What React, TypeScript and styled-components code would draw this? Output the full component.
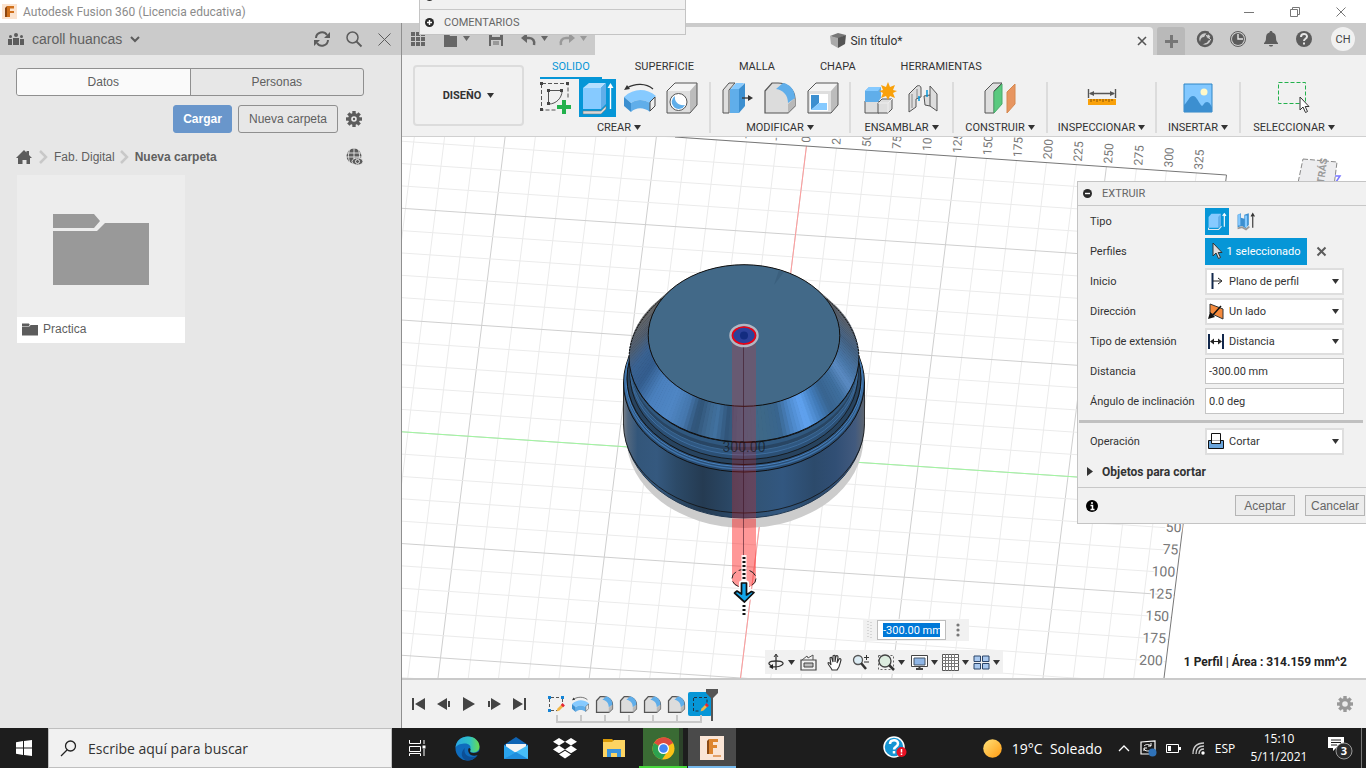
import React from "react";
import styled, { createGlobalStyle, css } from "styled-components";

const UI = `Roboto, "Liberation Sans", sans-serif`;
const PANEL = `"Liberation Sans", Arial, sans-serif`;
const SYSTEM = `"Open Sans", "Noto Sans", sans-serif`;

const Global = createGlobalStyle`
  * { box-sizing: border-box; }
  body { margin: 0; background: #fff; font-family: ${UI}; font-size: 11px; color: #333; overflow: hidden; }
  button, input, select { font: inherit; color: inherit; margin: 0; }
  button { padding: 0; border: 0; background: none; display: inline-flex; align-items: center; justify-content: center; }
  svg { display: block; flex: none; overflow: visible; }
`;

const Screen = styled.div`
  display: flex;
  flex-direction: column;
  height: 100vh;
  position: relative;
`;

/* ---------- window title bar ---------- */
const TitleBar = styled.header`
  display: flex;
  align-items: center;
  height: 23px;
  padding-left: 2px;
  background: #fff;
  font-size: 12px;
  color: #8b8b8b;
`;
const TitleText = styled.span`
  flex: 1;
  margin-left: 6px;
`;
const WindowButton = styled.button`
  width: 46px;
  height: 22px;
`;
const WindowButtons = styled.div`
  display: flex;
  margin-right: 2px;
`;

const Main = styled.main`
  flex: 1;
  display: flex;
  min-height: 0;
`;

/* ---------- data panel ---------- */
const DataPanel = styled.aside`
  flex: none;
  width: 402px;
  background: #e7e7e7;
  border-right: 1px solid #8f8f8f;
  font: 12px ${PANEL};
  color: #5f5f5f;
`;
const PanelHeader = styled.div`
  display: flex;
  align-items: center;
  height: 32px;
  padding: 0 10px 0 8px;
  background: #cbcbcb;
  font-size: 14px;
`;
const TeamButton = styled.button`
  gap: 8px;
  margin-right: auto;
`;
const PanelTools = styled.div`
  display: flex;
  gap: 16px;
`;
const PanelBody = styled.div`
  padding: 13px 37px 0 16px;
`;
const Toggle = styled.div`
  display: flex;
  height: 28px;
  border: 1px solid #8f8f8f;
  border-radius: 3px;
  overflow: hidden;
`;
const ToggleButton = styled.button<{ $on?: boolean }>`
  flex: 1;
  background: ${(p) => (p.$on ? "#fafafa" : "transparent")};
  & + & { border-left: 1px solid #8f8f8f; }
`;
const Actions = styled.div`
  display: flex;
  justify-content: flex-end;
  align-items: center;
  gap: 6px;
  margin-top: 9px;
`;
const ActionButton = styled.button<{ $primary?: boolean }>`
  height: 28px;
  width: 100px;
  border: 1px solid #8f8f8f;
  border-radius: 3px;
  ${(p) => p.$primary && css`
    width: 59px;
    border-color: #6996cb;
    background: #6996cb;
    color: #fff;
    font-weight: bold;
  `}
`;
const GearButton = styled.button`
  width: 20px;
`;
const Breadcrumb = styled.nav`
  display: flex;
  align-items: center;
  gap: 6px;
  height: 18px;
  margin-top: 15px;
  a { color: inherit; text-decoration: none; }
  button { margin-left: auto; }
`;
const FolderCard = styled.article`
  width: 168px;
  margin: 9px 0 0 1px;
  background: #fff;
`;
const FolderArt = styled.div`
  display: grid;
  place-items: center;
  height: 142px;
  padding-top: 6px;
  background: #ededed;
`;
const FolderName = styled.div`
  display: flex;
  align-items: center;
  gap: 5px;
  height: 26px;
  padding: 0 5px 2px;
`;

/* ---------- workspace ---------- */
const Workspace = styled.section`
  flex: 1;
  min-width: 0;
  display: flex;
  flex-direction: column;
`;
const DocumentBar = styled.div`
  display: flex;
  height: 32px;
  background: #cbcbcb;
  color: #555;
`;
const QuickAccess = styled.div`
  display: flex;
  align-items: center;
  width: 193px;
  padding-left: 9px;
`;
const DocumentTab = styled.div`
  flex: 1;
  display: flex;
  align-items: center;
  margin-top: 4px;
  padding-right: 4px;
  border-radius: 0 4px 0 0;
  background: #f1f1f1;
`;
const DocumentTitle = styled.div`
  flex: 1;
  display: flex;
  align-items: center;
  justify-content: center;
  gap: 4px;
  padding-left: 3px;
  font-size: 12px;
  color: #333;
`;
const NewTab = styled.button`
  width: 28px;
  margin: 4px 0 0 4px;
  border-radius: 3px 3px 0 0;
  background: #b9b9b9;
`;
const AccountTools = styled.div`
  display: flex;
  align-items: center;
  gap: 15px;
  padding: 0 11px;
`;
const Avatar = styled.button`
  width: 24px;
  height: 24px;
  margin-left: 3px;
  border-radius: 50%;
  background: #f1f1f1;
  color: #444;
`;

const Ribbon = styled.div`
  display: flex;
  height: 82px;
  padding-left: 11px;
  background: #f1f1f1;
  border-bottom: 1px solid #d0d0d0;
`;
const WorkspaceButton = styled.button`
  gap: 6px;
  width: 111px;
  height: 61px;
  margin: 10px 16px 0 0;
  border: 2px solid #dcdcdc;
  border-radius: 4px;
  font-weight: bold;
`;
const RibbonBody = styled.div`
  flex: 1;
`;
const RibbonTabs = styled.div`
  display: flex;
  gap: 21px;
  height: 24px;
`;
const RibbonTab = styled.button<{ $on?: boolean }>`
  padding: 0 12px;
  border-bottom: 2px solid ${(p) => (p.$on ? "#0696d7" : "transparent")};
  color: ${(p) => (p.$on ? "#0696d7" : "#333")};
`;
const Groups = styled.div`
  display: flex;
`;
const Group = styled.div<{ $w: number }>`
  display: flex;
  flex-direction: column;
  width: ${(p) => p.$w}px;
`;
const GroupIcons = styled.div`
  display: flex;
  justify-content: center;
  gap: 10px;
  height: 38px;
`;
const ToolButton = styled.button<{ $on?: boolean }>`
  width: ${(p) => (p.$on ? 38 : 33)}px;
  height: 38px;
  margin: ${(p) => (p.$on ? "0 -3px" : "0")};
  background: ${(p) => (p.$on ? "#0696d7" : "none")};
`;
const GroupLabel = styled.button`
  gap: 3px;
  height: 20px;
  white-space: nowrap;
`;
const Separator = styled.span`
  width: 2px;
  height: 51px;
  margin: 3px 0;
  background: #dcdcdc;
  &:first-of-type { margin-left: 11px; }
`;

/* ---------- 3D canvas ---------- */
const Canvas = styled.div`
  position: relative;
  flex: 1;
  min-height: 0;
  overflow: hidden;
  background: #fff;
  border-bottom: 2px solid #cacaca;
`;
const Scene = styled.svg`
  position: absolute;
  inset: 0;
  width: 100%;
  height: 100%;
`;
const ValueBox = styled.div`
  position: absolute;
  left: 461px;
  top: 482px;
  display: flex;
  align-items: center;
  gap: 5px;
  height: 22px;
  padding: 0 4px;
  background: #f1f1f1;
  input {
    width: 69px;
    height: 20px;
    padding: 2px 5px;
    border: 1px solid #bdbdbd;
    background: linear-gradient(#0078d7, #0078d7) content-box, #fff;
    color: #fff;
  }
  button { width: 14px; }
`;
const ViewBar = styled.div`
  position: absolute;
  bottom: 4px;
  left: 50%;
  transform: translateX(-50%);
  display: flex;
  align-items: center;
  height: 24px;
  padding: 0 3px;
  background: #f1f1f1;
`;
const ViewButton = styled.button<{ $w: number }>`
  width: ${(p) => p.$w}px;
  justify-content: flex-start;
  gap: 3px;
`;
const Status = styled.div`
  position: absolute;
  right: 19px;
  bottom: 9px;
  font-weight: bold;
  font-size: 12px;
  color: #222;
`;

/* ---------- extrude dialog ---------- */
const Dialog = styled.form`
  position: absolute;
  top: 44px;
  right: 0;
  width: 289px;
  background: #f1f1f1;
  border: 1px solid #c4c4c4;
  border-right: 0;
`;
const DialogHeader = styled.div`
  display: flex;
  align-items: center;
  gap: 10px;
  height: 24px;
  padding-left: 5px;
  border-bottom: 1px solid #c8c8c8;
  color: #666;
`;
const Row = styled.div`
  display: flex;
  align-items: center;
  height: 30px;
  padding-left: 12px;
  label, > span { width: 115px; }
`;
const TypeButton = styled.button<{ $on?: boolean }>`
  width: 24px;
  height: 27px;
  margin-right: 5px;
  background: ${(p) => (p.$on ? "#0696d7" : "none")};
`;
const Selection = styled.button`
  gap: 4px;
  width: 102px;
  height: 27px;
  margin-right: 10px;
  background: #0696d7;
  color: #fff;
`;
const SelectBox = styled.div`
  position: relative;
  width: 139px;
  select {
    appearance: none;
    width: 100%;
    height: 27px;
    padding: 0 20px 0 22px;
    border: 2px solid #dedede;
    border-radius: 0;
    background: #fff;
  }
  svg { position: absolute; left: 3px; top: 5px; pointer-events: none; }
  svg:last-child { left: auto; right: 5px; top: 11px; }
`;
const TextBox = styled.input`
  width: 139px;
  height: 26px;
  padding: 0 3px;
  border: 1px solid #c4c4c4;
  background: #fff;
`;
const Divider = styled.hr`
  height: 3px;
  margin: 4px 3px 3px 1px;
  border: 0;
  background: #c0c0c0;
`;
const Expander = styled.button`
  gap: 9px;
  height: 31px;
  padding-left: 9px;
  font-weight: bold;
  font-size: 12px;
`;
const DialogFooter = styled.div`
  display: flex;
  align-items: center;
  gap: 10px;
  height: 36px;
  padding: 0 1px 0 8px;
  border-top: 1px solid #c8c8c8;
  svg { margin-right: auto; }
`;
const DialogButton = styled.button`
  height: 21px;
  width: 60px;
  border: 1px solid #b5b5b5;
  background: #ececec;
  font: 12px ${PANEL};
  color: #666;
`;

/* ---------- timeline ---------- */
const Timeline = styled.div`
  display: flex;
  align-items: flex-start;
  height: 48px;
  padding: 12px 13px 0 9px;
  background: #f1f1f1;
`;
const Playback = styled.div`
  display: flex;
  gap: 9px;
  button { width: 16px; height: 24px; }
`;
const Track = styled.div`
  display: flex;
  position: relative;
  margin-left: 17px;
`;
const Feature = styled.button<{ $on?: boolean }>`
  position: relative;
  width: 24px;
  height: 24px;
  background: ${(p) => (p.$on ? "#0696d7" : "none")};
  border-radius: 2px;
  &::after {
    content: "";
    position: absolute;
    left: 12px;
    top: 23px;
    width: 24px;
    height: 6px;
    border: solid #c8c8c8;
    border-width: 0 0 2px 2px;
  }
  &:nth-last-of-type(1)::after { width: 2px; border-bottom: 0; height: 6px; }
`;
const Marker = styled.svg`
  position: absolute;
  right: -6px;
  top: -3px;
`;
const TimelineGear = styled.button`
  margin-left: auto;
  height: 24px;
`;

/* ---------- floating browser / comments ---------- */
const Floating = styled.div`
  position: absolute;
  top: 0;
  left: 419px;
  width: 267px;
  height: 35px;
  overflow: hidden;
  display: flex;
  flex-direction: column;
  justify-content: flex-end;
  background: #f1f1f1;
  border: 1px solid #c4c4c4;
  border-top: 0;
  color: #666;
`;
const FloatingRow = styled.div`
  flex: none;
  display: flex;
  align-items: center;
  gap: 10px;
  height: 25px;
  padding-left: 5px;
  & + & { border-top: 1px solid #c8c8c8; }
`;

/* ---------- taskbar ---------- */
const Taskbar = styled.footer`
  display: flex;
  align-items: stretch;
  height: 40px;
  background: #1d1d1d;
  color: #fff;
  font: 12px ${SYSTEM};
`;
const StartButton = styled.button`
  width: 48px;
`;
const SearchBox = styled.label`
  display: flex;
  align-items: center;
  gap: 11px;
  width: 344px;
  padding-left: 11px;
  border: 1px solid #bfbfbf;
  background: #f1f1f1;
  input {
    flex: 1;
    border: 0;
    background: none;
    padding: 0;
    font: 14px ${SYSTEM};
    outline: 0;
    &::placeholder { color: #333; opacity: 1; }
  }
`;
const Apps = styled.div`
  display: flex;
  gap: 1px;
  button { width: 48px; }
  button:first-child { width: 50px; }
`;
const AppButton = styled.button<{ $bg?: string; $line?: string }>`
  background: ${(p) => p.$bg || "none"};
  border-bottom: 2px solid ${(p) => p.$line || "transparent"};
  padding-top: 2px;
`;
const Tray = styled.div`
  display: flex;
  align-items: center;
  margin-left: auto;
  padding-right: 4px;
`;
const TrayButton = styled.button<{ $w: number; $large?: boolean }>`
  width: ${(p) => p.$w}px;
  height: 40px;
  gap: 10px;
  white-space: pre;
  font-size: ${(p) => (p.$large ? 14 : 12)}px;
`;
const Clock = styled.time`
  width: 80px;
  text-align: center;
  line-height: 18px;
`;
const ShowDesktop = styled.span`
  width: 1px;
  height: 40px;
  background: #777;
`;

/* ---------- small glyphs ---------- */
type IconProps = { w?: number; h?: number; box?: string; children: React.ReactNode };
const Icon = ({ w = 16, h, box, children }: IconProps) => (
  <svg width={w} height={h ?? w} viewBox={box ?? `0 0 ${w} ${h ?? w}`} fill="none" aria-hidden="true">{children}</svg>
);
const Caret = ({ c = "#333" }: { c?: string }) => (
  <Icon w={7} h={5}><path d="M0 0h7L3.500 5z" fill={c} /></Icon>
);
const Gear = ({ c = "#5c5c5c" }: { c?: string }) => (
  <Icon>
    {[0, 45, 90, 135].map((a) => <path key={a} d="M8 0v16" stroke={c} strokeWidth="3.400" transform={`rotate(${a} 8 8)`} />)}
    <circle cx="8" cy="8" r="4.300" stroke={c} strokeWidth="3.200" />
    <circle cx="8" cy="8" r="2.800" fill="#ececec" />
    {c === "#5c5c5c" && <circle cx="8" cy="8" r="1.200" fill={c} />}
  </Icon>
);
const Cross = ({ s = 9, w = 2, c = "#5c5c5c" }) => (
  <Icon w={s}><path d={`M0.500 0.500L${s - 0.5} ${s - 0.5}M${s - 0.5} 0.500L0.500 ${s - 0.5}`} stroke={c} strokeWidth={w} /></Icon>
);
const Bullet = ({ plus }: { plus?: boolean }) => (
  <Icon w={9}><circle cx="4.500" cy="4.500" r="4.500" fill="#2b2b2b" /><path d={plus ? "M2 4.500h5M4.500 2v5" : "M2 4.500h5"} stroke="#fff" strokeWidth="1.400" /></Icon>
);
const Cursor = ({ fill = "#ddd" }) => (
  <path d="M1 0v13l3-3 2.500 5.500 2-1L6.200 9.500H10z" fill={fill} stroke="#333" />
);
const FolderGlyph = ({ w, h, c }: { w: number; h: number; c: string }) => (
  <Icon w={w} h={h} box="0 0 96 71"><path d="M0 0h41l6 7-6 7H0zM0 17h44l8-8h44v62H0z" fill={c} /></Icon>
);

/* ---------- ribbon icons ---------- */
const SketchIcon = () => (
  <Icon w={32}>
    <path d="M2 1.500h26v16M1.500 2v26h15" stroke="#555" strokeDasharray="4 2" />
    <path d="M9 8.500h13M8.500 9v13M9 22c7 0 13-6 13-13" stroke="#555" />
    {[[0, 0], [26, 0], [0, 26], [7, 7], [20, 7], [7, 20]].map(([x, y]) => <path key={`${x}-${y}`} d={`M${x} ${y}h3v3h-3z`} fill="#444" />)}
    <path d="M24 18v14M17 25h14" stroke="#22b14c" strokeWidth="4" />
  </Icon>
);
const ExtrudeIcon = () => (
  <Icon w={32}>
    <path d="M1 29h18l5-5v3l-5 5H1z" fill="#d8d8d8" stroke="#777" strokeWidth=".5" />
    <path d="M1 6l6-5h17l-5 5z" fill="#b5dfff" /><path d="M1 6h18v21H1z" fill="#86caff" /><path d="M19 6l5-5v21l-5 5z" fill="#60aeea" />
    <path d="M28.500 27V4" stroke="#fff" strokeWidth="1.400" /><path d="M25.500 6l3-5 3 5z" fill="#fff" />
  </Icon>
);
const RevolveIcon = ({ w = 32 }: { w?: number }) => (
  <Icon w={w} box="0 0 32 32">
    <path d="M3 6C11 1 22 1 29 7" stroke="#333" strokeWidth="1.200" /><path d="M0 8l3-5 3 4z" fill="#333" />
    <path d="M0 15C10 6 22 6 32 14l-6 7c-6-4-14-4-19 0z" fill="#86caff" />
    <path d="M0 15l7 6v9l-7-6z" fill="#3c8fd0" /><path d="M7 21c5-4 13-4 19 0v9c-6-5-14-5-19 0z" fill="#60aeea" />
    <path d="M26 20l5-5v9l-5 5z" fill="#eee" stroke="#444" />
  </Icon>
);
const BoxShape = () => (
  <>
    <path d="M1 9l8-8h22l-7 8z" fill="#f4f4f4" /><path d="M24 9l7-8v22l-7 8z" fill="#bcbcbc" /><path d="M1 9h23v22H1z" fill="#dedede" />
    <path d="M1 9l8-8h22v22l-7 8H1z" stroke="#555" />
  </>
);
const HoleIcon = () => (
  <Icon w={32}><BoxShape /><circle cx="12.500" cy="20" r="8.500" fill="#fff" stroke="#555" /><path d="M9 14a7 7 0 1 0 10 9C13 24 8 20 9 14z" fill="#60aeea" /></Icon>
);
const PressPullIcon = () => (
  <Icon w={32}>
    <path d="M2 8l6-7h6l-6 7v23H2z" fill="#dedede" stroke="#555" /><path d="M9 8l6-7h8l-5 7z" fill="#86caff" />
    <path d="M9 7h9v24H9z" fill="#60aeea" /><path d="M18 7l6-6v23l-6 7z" fill="#3c8fd0" />
    <path d="M21 16h9" stroke="#333" strokeWidth="1.300" /><path d="M27 13l5 3-5 3z" fill="#333" />
  </Icon>
);
const FilletIcon = ({ w = 32 }: { w?: number }) => (
  <Icon w={w} box="0 0 32 32">
    <path d="M1 9l7-8h6c8 0 17 6 17 16v7l-7 7H1z" fill="#dcdcdc" stroke="#555" strokeWidth={w < 20 ? 2.4 : 1.2} />
    <path d="M24 22l7-6v8l-7 7z" fill="#b8b8b8" />
    <path d="M12 7l7-6c7 1 12 7 12 15l-7 5C24 13 19 8 12 7z" fill="#60aeea" />
  </Icon>
);
const ShellIcon = () => (
  <Icon w={32}><BoxShape /><path d="M3 12h18v17H3z" fill="#fff" /><path d="M4 13h8v8l-8 7z" fill="#3c8fd0" /><path d="M4 28l8-7h8v7z" fill="#86caff" /></Icon>
);
const AssembleIcon = () => (
  <Icon w={32}>
    <path d="M1 19h14v12H1z" fill="#dedede" stroke="#555" /><path d="M14 21l4-4h10v10l-4 4H14z" fill="#dedede" stroke="#555" /><path d="M14 21h10v10M24 21l4-4" stroke="#eee" />
    <path d="M1 9l4-4h12v11l-3 4H1z" fill="#60aeea" /><path d="M1 9l4-4h12l-3 4z" fill="#86caff" />
    <path d="M24 0l2 5 5-2-2 5 4 1-4 2 2 5-5-2-2 4-2-4-5 2 2-5-4-2 4-1-2-5 5 2z" fill="#f9a10a" />
  </Icon>
);
const JointIcon = () => (
  <Icon w={32}>
    <path d="M2 12l8-8c2-1 4 0 4 2v9l-5 2v8l-7 5z" fill="#ddd" stroke="#555" /><path d="M5 12v14M10 7v9" stroke="#888" />
    <path d="M17 14l6-1V4l7 8v17l-7-5-5-1z" fill="#ddd" stroke="#555" /><path d="M23 13v11" stroke="#555" />
    <path d="M12 14v5M20 8v7" stroke="#0696d7" strokeWidth="1.500" />
  </Icon>
);
const PlaneIcon = () => (
  <Icon w={32}>
    <path d="M1 9l8-8h9l-8 8v22H1z" fill="#dedede" stroke="#555" /><path d="M10 10l8-8v20l-8 9z" fill="#5ac97f" stroke="#48ab6a" />
    <path d="M23 10l8-8v20l-8 9z" fill="#e79560" stroke="#d6884f" />
  </Icon>
);
const MeasureIcon = () => (
  <Icon w={30} h={32}>
    <path d="M1.500 7v9M28.500 7v9M3 11.500h24" stroke="#555" strokeWidth="1.400" /><path d="M2 11.500l5-2.500v5zM28 11.500l-5-2.500v5z" fill="#555" />
    <path d="M1 17h28v6H1z" fill="#f9a10a" /><path d="M4 17v3M7 17v2M10 17v3M13 17v2M16 17v3M19 17v2M22 17v3M25 17v2" stroke="#8a5200" />
  </Icon>
);
const ImageIcon = () => (
  <Icon w={30}>
    <path d="M1 1h28v28H1z" fill="#82c8ff" stroke="#2f86c6" /><circle cx="21" cy="9" r="3.500" fill="#fff8c8" />
    <path d="M1 22c4-3 5-9 9-9s6 8 9 10c2-1 2-4 5-4s4 4 5 5v5H1z" fill="#3c8fd0" />
  </Icon>
);
const SelectIcon = () => (
  <Icon w={32}><path d="M.5 .5h27v21h-27z" stroke="#22b14c" strokeDasharray="4 2" /><g transform="translate(21 15)"><Cursor fill="#fff" /></g></Icon>
);

/* ---------- scene geometry ---------- */
const CX = 744;
const colX = (n: number, y: number) => 807.6 + 30.25 * n - 0.124 * (y - 137);
const rowY = (m: number, x: number) => 431.8 + 22.35 * m + 0.067 * (x - 402);

const shades: [number, string][] = [
  [-90, "#7b8288"], [-40, "#6d6f72"], [-18, "#5b6573"], [0, "#456486"], [14, "#4977a8"], [22, "#5b8cc4"], [30, "#3f6f9f"],
  [40, "#38648f"], [47, "#427cba"], [56, "#62a4f2"], [64, "#4c87c8"], [71, "#39658e"], [80, "#3e6887"], [92, "#3d6486"],
  [99, "#31557a"], [105, "#41719f"], [110, "#3d6890"], [116, "#2f5275"], [123, "#4577ad"], [132, "#4f86c4"], [146, "#4a80bd"],
  [158, "#335d8e"], [170, "#3a6292"], [184, "#525f70"], [205, "#6b6c6d"], [270, "#7b8288"],
];
const rgb = (h: string) => [1, 3, 5].map((i) => parseInt(h.slice(i, i + 2), 16));
const shadeAt = (a: number) => {
  const i = Math.max(1, shades.findIndex(([s]) => s >= a));
  const [a0, c0] = shades[i - 1];
  const [a1, c1] = shades[i];
  const t = (a - a0) / (a1 - a0);
  const p = rgb(c0);
  const q = rgb(c1);
  return `rgb(${p.map((v, k) => Math.round(v + (q[k] - v) * t)).join(",")})`;
};
const onEllipse = (a: number, rx: number, ry: number, cy: number) => {
  const r = (a * Math.PI) / 180;
  return `${(CX + rx * Math.cos(r)).toFixed(1)},${(cy + ry * Math.sin(r)).toFixed(1)}`;
};
const facets = Array.from({ length: 180 }, (_, i) => {
  const a = -90 + i * 2;
  return {
    fill: shadeAt(a + 1),
    points: [onEllipse(a, 95.8, 70.8, 335.5), onEllipse(a + 2.4, 95.8, 70.8, 335.5), onEllipse(a + 2.4, 115, 85, 357), onEllipse(a, 115, 85, 357)].join(" "),
  };
});
const bodyStops: [number, string][] = [[0, "#7b828a"], [2, "#51677f"], [6, "#33567a"], [14, "#35597f"], [22, "#2c4a68"], [33, "#253b52"], [43, "#2a4663"], [52, "#315373"], [66, "#325780"], [79, "#2c4a6b"], [88, "#314f75"], [96, "#425a7e"], [100, "#606770"]];

const Model = () => (
  <g>
    <ellipse cx="745" cy="438" rx="118.500" ry="90" fill="#ccc" />
    <path d="M624 424a120 94 0 0 0 240 0z" fill="url(#body)" stroke="#243b54" />
    <path d="M623.500 383V424a120.500 89 0 0 0 241 0V383z" fill="url(#body)" />
    <path d="M623.500 383V424a120.500 89 0 0 0 241 0V383" stroke="#111" strokeWidth=".8" />
    <ellipse cx="744" cy="383" rx="120.500" ry="89" fill="#2a4d73" stroke="#111" />
    <ellipse cx="744" cy="381.500" rx="119" ry="87.500" stroke="#3f74ab" strokeWidth="1.500" />
    <ellipse cx="744" cy="379.500" rx="118" ry="87" stroke="#4a83bf" strokeWidth="1" />
    <ellipse cx="744" cy="378" rx="117" ry="86.500" fill="#27435f" stroke="#111" />
    <ellipse cx="744" cy="375" rx="114" ry="84.500" fill="#2c5075" stroke="#111" strokeWidth=".8" />
    <ellipse cx="744" cy="371" rx="113.500" ry="84" fill="#2f5780" stroke="#3f6e9f" />
    <ellipse cx="744" cy="367" rx="113.500" ry="84" fill="#284563" stroke="#3c6893" />
    <ellipse cx="744" cy="363" rx="114" ry="84" fill="#30587f" />
    <ellipse cx="744" cy="358" rx="115" ry="85" fill="#111" />
    {facets.map((f) => <polygon key={f.points} points={f.points} fill={f.fill} />)}
    <path d="M629 357a115 85 0 0 0 230 0" stroke="#111" />
    <path d="M629 357C630 332 645 313 662 298M859 357C858 332 843 313 826 298" stroke="#111" strokeDasharray="2 1" />
    <ellipse cx="744" cy="335.500" rx="95.800" ry="70.800" fill="#426988" stroke="#111" />
    <path d="M774 285l5-15 5 2z" fill="#3b607e" />
    <path d="M732 337h24v242a12 9 0 0 1-24 0z" fill="#ff2020" fillOpacity=".2" />
    <path d="M732 470h24v48h-24z" fill="#ff2020" fillOpacity=".06" />
    <path d="M732 519h24v60a12 9 0 0 1-24 0z" fill="#ff2020" fillOpacity=".33" />
    <path d="M743.500 337V578" stroke="#3a1020" strokeWidth=".8" strokeOpacity=".7" />
    <ellipse cx="744" cy="335.500" rx="13.500" ry="10.500" stroke="#b3b6c2" strokeWidth="2.500" />
    <ellipse cx="744" cy="335.500" rx="11.500" ry="8.500" fill="#2c419a" stroke="#f00012" strokeWidth="1.600" />
    <circle cx="744" cy="335.500" r="4" fill="#132c80" />
    <text x="744" y="452" textAnchor="middle" fontSize="14" fill="#111" fillOpacity=".6">300.00</text>
    <ellipse cx="744" cy="578.500" rx="12" ry="9" stroke="#222" strokeDasharray="8 3" />
    <path d="M744 555v61" stroke="#fff" strokeWidth="5" strokeOpacity=".9" />
    <path d="M744 557v59" stroke="#111" strokeWidth="3" strokeDasharray="2 2" />
    <path d="M741.500 583h5v12l5-3.500 2.500 1-9.500 9.500-10-9 2.500-2 4.500 3z" fill="#13a5ea" stroke="#fff" strokeWidth="5" strokeLinejoin="round" />
    <path d="M741.500 583h5v12l5-3.500 2.500 1-9.500 9.500-10-9 2.500-2 4.500 3z" fill="#13a5ea" stroke="#111" strokeWidth="1.700" strokeLinejoin="round" />
  </g>
);

const range = (a: number, b: number) => Array.from({ length: b - a + 1 }, (_, i) => a + i);

const Viewport = () => (
  <Scene viewBox="402 137 964 541" preserveAspectRatio="xMinYMin slice" fill="none" fontFamily={UI}>
    <defs>
      <linearGradient id="body" gradientUnits="userSpaceOnUse" x1="623" x2="865" y1="0" y2="0">
        {bodyStops.map(([o, c]) => <stop key={o} offset={`${o}%`} stopColor={c} />)}
      </linearGradient>
      <clipPath id="plane"><path d="M402 118L1227 175 1164 680H402z" /></clipPath>
    </defs>
    <g clipPath="url(#plane)">
      {range(-14, 13).map((n) => <path key={n} d={`M${colX(n, 110)} 110L${colX(n, 680)} 680`} stroke={n % 5 ? "#ebebeb" : "#cfcfcf"} />)}
      {range(-14, 13).map((m) => <path key={m} d={`M402 ${rowY(m, 402)}L1230 ${rowY(m, 1230)}`} stroke={m % 5 ? "#ebebeb" : "#cfcfcf"} />)}
      <path d={`M${colX(0, 146)} 146L${colX(0, 680)} 680`} stroke="#ff9c9c" />
      <path d={`M402 ${rowY(0, 402)}L1230 ${rowY(0, 1230)}`} stroke="#a0f7a0" />
    </g>
    <path d="M675 137L1226.500 175 1164 678" stroke="#777" />
    <g fontSize="12" fill="#777">
      {range(-2, 13).map((n) => (
        <text key={n} transform={`translate(${810 + 30.2 * n} ${143 + 2.07 * n}) rotate(-86)`}>{n * 25}</text>
      ))}
    </g>
    <g fontSize="14" fill="#777" textAnchor="end" stroke="#fff" strokeWidth="3" paintOrder="stroke">
      {range(2, 8).map((m) => <text key={m} x={1187.5 - 3.1 * m} y={488 + 22.2 * m} transform={`rotate(2 ${1187.5 - 3.1 * m} ${488 + 22.2 * m})`}>{m * 25}</text>)}
    </g>
    <path d="M1303 159l34 3-5 40h-38z" fill="#ededef" stroke="#888" strokeDasharray="5 2" />
    <text transform="translate(1323 190) rotate(-82)" fontSize="10" fontWeight="bold" fill="#999">ATRÁS</text>
    <path d="M1335 176h5l-4 6" stroke="#7a78ff" strokeWidth="1.500" />
    <Model />
  </Scene>
);

const selectRows = [
  { id: "inicio", label: "Inicio", value: "Plano de perfil", icon: <><path d="M4.500 0v16" stroke="#12284c" strokeWidth="2" /><path d="M5 8h8" stroke="#222" /><path d="M10 5l4 3-4 3" stroke="#222" /></> },
  { id: "direccion", label: "Dirección", value: "Un lado", icon: <><path d="M2 1l13 5v10L2 10z" fill="#f58a3c" stroke="#333" /><path d="M13 3L4 13" stroke="#111" strokeWidth="1.500" /><path d="M0 16l2-7 5 5z" fill="#111" /></> },
  { id: "extension", label: "Tipo de extensión", value: "Distancia", icon: <><path d="M1 1v15M15 1v15" stroke="#12284c" strokeWidth="2" /><path d="M3 8.500h10" stroke="#222" /><path d="M2 8.500l4-3v6zM14 8.500l-4-3v6z" fill="#222" /></> },
];

const SelectField = ({ id, label, value, icon }: { id: string; label: string; value: string; icon: React.ReactNode }) => (
  <Row>
    <label htmlFor={id}>{label}</label>
    <SelectBox>
      <select id={id} defaultValue={value}><option>{value}</option></select>
      <Icon w={17}>{icon}</Icon>
      <Caret />
    </SelectBox>
  </Row>
);

const ExtrudeDialog = () => (
  <Dialog onSubmit={(e) => e.preventDefault()}>
    <DialogHeader><Bullet />EXTRUIR</DialogHeader>
    <Row>
      <span>Tipo</span>
      <TypeButton type="button" $on aria-label="Extruir"><Icon w={18} box="0 0 32 32"><path d="M1 9l5-6h17v20l-5 5H1z" fill="#86caff" /><path d="M18 9l5-6v20l-5 5z" fill="#60aeea" /><path d="M1 28v3h18l5-6" stroke="#d8e8f4" strokeWidth="2" /><path d="M29 26V4M26 7l3-4 3 4" stroke="#fff" strokeWidth="2" /></Icon></TypeButton>
      <TypeButton type="button" aria-label="Extrusión fina"><Icon w={18} box="0 0 32 32"><path d="M1 5l6-3v8l6 2V5l8-3v21l-6 6-6-4-8 2z" fill="#3c8fd0" /><path d="M4 4v20M16 6v21" stroke="#86caff" strokeWidth="4" /><path d="M1 29l8-2 7 4 6-5" stroke="#999" strokeWidth="3" /><path d="M28 28V4M25 8l3-5 3 5" stroke="#333" strokeWidth="2" /></Icon></TypeButton>
    </Row>
    <Row>
      <span>Perfiles</span>
      <Selection type="button"><Icon w={11} h={16}><Cursor /></Icon>1 seleccionado</Selection>
      <button type="button" aria-label="Quitar selección"><Cross /></button>
    </Row>
    {selectRows.map((r) => <SelectField key={r.id} {...r} />)}
    <Row><label htmlFor="distancia">Distancia</label><TextBox id="distancia" defaultValue="-300.00 mm" /></Row>
    <Row><label htmlFor="angulo">Ángulo de inclinación</label><TextBox id="angulo" defaultValue="0.0 deg" /></Row>
    <Divider />
    <SelectField id="operacion" label="Operación" value="Cortar" icon={<><path d="M.5 7.500h15v8H.5z" fill="#6aa5dc" stroke="#111" /><path d="M3.500 .5h9v10h-9z" fill="#fff" stroke="#111" /><path d="M4 7.500h8" stroke="#aaa" /></>} />
    <Expander type="button"><Icon w={6} h={9}><path d="M0 0l6 4.500L0 9z" fill="#333" /></Icon>Objetos para cortar</Expander>
    <DialogFooter>
      <Icon w={12}><circle cx="6" cy="6" r="6" fill="#000" /><path d="M6 2v2M4.500 5.500H6.500V9M4.500 9.500h4" stroke="#fff" strokeWidth="1.500" /></Icon>
      <DialogButton type="submit">Aceptar</DialogButton>
      <DialogButton type="button">Cancelar</DialogButton>
    </DialogFooter>
  </Dialog>
);

const views = [
  { name: "Orbitar", w: 32, caret: true, icon: <><path d="M8 1v15" stroke="#333" strokeWidth="1.300" /><path d="M6 3l2-3 2 3" stroke="#333" /><path d="M4 12C-1 10 0 7 8 7s9 3 4 5c-2 1-6 1-9 1" stroke="#333" strokeWidth="1.300" /><path d="M1 13l4-3v5z" fill="#222" /></> },
  { name: "Mirar a", w: 27, icon: <><path d="M1 6h15v10H1z" stroke="#444" strokeWidth="1.200" /><path d="M4 9h9v4H4z" fill="#bbb" stroke="#444" /><path d="M2 6l5-4 1 2 5-3v5" stroke="#555" /></> },
  { name: "Encuadre", w: 25, icon: <path d="M5 16c-1-3-4-5-4-7 1-1 2 0 3 2L3 4c1-1 2-1 2 1l1 3V2c1-1 2-1 2 0v6l1-6c1-1 2 0 2 1l-1 6 2-4c1-1 2 0 2 1-1 3-1 7-4 10z" fill="#fff" stroke="#333" strokeWidth="1.100" /> },
  { name: "Zoom", w: 26, icon: <><circle cx="6" cy="6" r="4.500" fill="#dcecf4" stroke="#555" strokeWidth="1.300" /><path d="M9 9l5 6" stroke="#333" strokeWidth="2.500" /><path d="M12 3.500h5M14.500 1v5M12 8h5" stroke="#333" /></> },
  { name: "Ajustar", w: 33, caret: true, icon: <><path d="M.5 1.500h15v14H.5z" stroke="#666" strokeDasharray="2 2" /><circle cx="7" cy="7" r="6" fill="#dcecdf" stroke="#444" strokeWidth="1.300" /><path d="M11 11l5 5" stroke="#333" strokeWidth="2.500" /></> },
  { name: "Visualización", w: 31, caret: true, icon: <><path d="M.5 1.500h16v11H.5z" fill="#fff" stroke="#444" /><path d="M3 4h11v7H3z" fill="#8fb6e6" stroke="#456" /><path d="M5 15h7M8.500 13v2" stroke="#444" strokeWidth="2" /></> },
  { name: "Rejilla", w: 31, caret: true, icon: <><path d="M.5 .5h16v16H.5z" fill="#fff" stroke="#555" /><path d="M3.500 0v17M6.500 0v17M9.500 0v17M12.500 0v17M0 3.500h17M0 6.500h17M0 9.500h17M0 12.500h17" stroke="#777" /></> },
  { name: "Ventanas", w: 27, caret: true, icon: <path d="M1 2h6.500v5.500H1zM9.500 2H16v5.500H9.500zM1 9.500h6.500V15H1zM9.500 9.500H16V15H9.500z" fill="#a9c8ee" stroke="#2b4468" /> },
];

const Pencil = () => <><path d="M8.500 15.500l1-3 4.500-4.500 2 2-4.500 4.500z" fill="#f2b544" /><path d="M13.700 8l2.300 2.300" stroke="#e32636" strokeWidth="2.500" /></>;
const playback = [
  ["Inicio", "M3 2v12h-2V2zM14 2v12L4 8z"],
  ["Anterior", "M11 2v12L1 8zM12 5h2v6h-2z"],
  ["Reproducir", "M2 1v14l12-7z"],
  ["Siguiente", "M2 5h2v6H2zM5 2v12l10-6z"],
  ["Final", "M2 2v12l10-6zM13 2h2v12h-2z"],
];

const groups = [
  { name: "MODIFICAR", w: 138, icons: [<PressPullIcon />, <FilletIcon />, <ShellIcon />] },
  { name: "ENSAMBLAR", w: 101, icons: [<AssembleIcon />, <JointIcon />] },
  { name: "CONSTRUIR", w: 92, icons: [<PlaneIcon />] },
  { name: "INSPECCIONAR", w: 107, icons: [<MeasureIcon />] },
  { name: "INSERTAR", w: 82, icons: [<ImageIcon />] },
  { name: "SELECCIONAR", w: 106, icons: [<SelectIcon />] },
];

export default function App() {
  return (
    <Screen>
      <Global />
      <TitleBar>
        <Icon w={15}><path d="M0 0h15v15H0z" fill="#fbe3cf" /><path d="M5 13V2h7v2.500H8V7h4v2H8v4z" fill="#d0701c" /><path d="M5 2L3 4v9h2z" fill="#8c4610" /></Icon>
        <TitleText>Autodesk Fusion 360 (Licencia educativa)</TitleText>
        <WindowButtons>
          <WindowButton aria-label="Minimizar"><Icon w={10}><path d="M0 5.500h10" stroke="#777" /></Icon></WindowButton>
          <WindowButton aria-label="Restaurar"><Icon w={10}><path d="M.5 2.500h7v7h-7zM2.500 2V.5h7v7H8" stroke="#777" /></Icon></WindowButton>
          <WindowButton aria-label="Cerrar"><Cross s={10} w={1} c="#777" /></WindowButton>
        </WindowButtons>
      </TitleBar>

      <Main>
        <DataPanel>
          <PanelHeader>
            <TeamButton>
              <Icon w={16} h={12}><g fill="#5c5c5c"><circle cx="8" cy="2" r="2" /><circle cx="2.500" cy="3.500" r="1.500" /><circle cx="13.500" cy="3.500" r="1.500" /><path d="M5 5h6v7H5zM0 6h4v6H0zM12 6h4v6h-4z" /></g></Icon>
              caroll huancas
              <Icon w={10} h={6}><path d="M1 1l4 4 4-4" stroke="#5c5c5c" strokeWidth="2" /></Icon>
            </TeamButton>
            <PanelTools>
              <button aria-label="Actualizar"><Icon><path d="M2 7a6 6 0 0 1 11-3M14 9a6 6 0 0 1-11 3" stroke="#5c5c5c" strokeWidth="2" /><path d="M16 1v6h-6zM0 15V9h6z" fill="#5c5c5c" /></Icon></button>
              <button aria-label="Buscar"><Icon><circle cx="6.500" cy="6.500" r="5.500" stroke="#5c5c5c" strokeWidth="1.500" /><path d="M10.500 10.500l5 5" stroke="#5c5c5c" strokeWidth="1.800" /></Icon></button>
              <button aria-label="Cerrar panel"><Cross s={13} w={1} /></button>
            </PanelTools>
          </PanelHeader>
          <PanelBody>
            <Toggle><ToggleButton $on>Datos</ToggleButton><ToggleButton>Personas</ToggleButton></Toggle>
            <Actions>
              <ActionButton $primary>Cargar</ActionButton>
              <ActionButton>Nueva carpeta</ActionButton>
              <GearButton aria-label="Ajustes"><Gear /></GearButton>
            </Actions>
            <Breadcrumb>
              <a href="#inicio" aria-label="Inicio"><Icon><path d="M8 1l2.500 2.400V2H13v4l3 3h-2v6h-3.500v-4h-4v4H2V9H0z" fill="#5c5c5c" /></Icon></a>
              <Icon w={10} h={14}><path d="M2 1l6 6-6 6" stroke="#c8c8c8" strokeWidth="2.500" /></Icon>
              <a href="#fab">Fab. Digital</a>
              <Icon w={8} h={14}><path d="M0 1l6 6-6 6" stroke="#c8c8c8" strokeWidth="2.500" /></Icon>
              <b>Nueva carpeta</b>
              <button aria-label="Ver en la web"><Icon w={18}><circle cx="8" cy="8" r="7.500" fill="#5c5c5c" /><path d="M1 5h14M0 9h16M8 0v16M4 1c-2 4-2 9 0 14M12 1c2 4 2 9 0 14" stroke="#e7e7e7" strokeWidth=".9" /><ellipse cx="11.500" cy="13.500" rx="5.500" ry="3.500" fill="#5c5c5c" stroke="#e7e7e7" /><circle cx="11.500" cy="13.500" r="2" stroke="#e7e7e7" /></Icon></button>
            </Breadcrumb>
            <FolderCard>
              <FolderArt><FolderGlyph w={96} h={71} c="#999" /></FolderArt>
              <FolderName><FolderGlyph w={16} h={13} c="#5c5c5c" />Practica</FolderName>
            </FolderCard>
          </PanelBody>
        </DataPanel>

        <Workspace>
          <DocumentBar>
            <QuickAccess>
              <Icon w={184} h={32}>
                <g fill="#666">
                  {[0, 5, 10].map((x) => [9, 14, 19].map((y) => <path key={`${x}-${y}`} d={`M${x} ${y}h4v4h-4z`} />))}
                  <path d="M33 11h5l1 2h7v11H33zM78 9h13l1 2v12H78z" />
                  <path d="M52 13h7l-3.500 5zM130 13h7l-3.500 5z" />
                </g>
                <path d="M81 9h8v5h-8zM80 17h10v6H80z" fill="#cbcbcb" /><path d="M82 19h6M82 21h6" stroke="#666" />
                <path d="M113 15h5c4 0 6 3 5 7" stroke="#666" strokeWidth="2.500" /><path d="M110 15l6-5v10z" fill="#666" />
                <path d="M160 15h-5c-4 0-6 3-5 7" stroke="#999" strokeWidth="2.500" /><path d="M164 15l-6-5v10zM169 13h7l-3.500 5z" fill="#999" />
              </Icon>
            </QuickAccess>
            <DocumentTab>
              <DocumentTitle>
                <Icon><path d="M0 3l8-3 8 2-8 4z" fill="#777" /><path d="M0 3l8 2v10l-7-4z" fill="#aaa" /><path d="M8 5l8-3-1 9-7 4z" fill="#555" /></Icon>
                Sin título*
              </DocumentTitle>
              <button aria-label="Cerrar documento"><Icon w={14}><path d="M3 3l8 8M11 3l-8 8" stroke="#555" strokeWidth="1.600" /></Icon></button>
            </DocumentTab>
            <NewTab aria-label="Nuevo diseño"><Icon w={13}><path d="M6.500 0v13M0 6.500h13" stroke="#777" strokeWidth="3" /></Icon></NewTab>
            <AccountTools>
              <button aria-label="Extensiones"><Icon w={18}><circle cx="9" cy="9" r="7" stroke="#5c5c5c" strokeWidth="2.500" /><path d="M4 14c0-4 1-7 4-7 3-1 5 2 4 4-1 3-5 2-8 5z" fill="#5c5c5c" /><path d="M9 7l3-4M12 10l4-3" stroke="#5c5c5c" strokeWidth="2" /><path d="M10 5l5 5M13 2l4 3" stroke="#cbcbcb" /></Icon></button>
              <button aria-label="Estado de trabajos"><Icon w={18}><circle cx="9" cy="9" r="7.500" stroke="#5c5c5c" /><circle cx="9" cy="9" r="6" fill="#5c5c5c" /><path d="M9 4v5h5" stroke="#e5e5e5" strokeWidth="1.400" /></Icon></button>
              <button aria-label="Notificaciones"><Icon w={18}><path d="M9 1c1 0 1.500.7 1.500 1.500C13 3 14 5 14 8c0 3 1 4 2 5v1H2v-1c1-1 2-2 2-5 0-3 1-5 3.500-5.500C7.500 1.700 8 1 9 1zM7 15h4c0 2-4 2-4 0z" fill="#5c5c5c" /></Icon></button>
              <button aria-label="Ayuda"><Icon w={18}><circle cx="9" cy="9" r="8" fill="#5c5c5c" /><path d="M6 7c0-4 6-4 6-.5C12 9 9 8.500 9 11M9 12.500v2" stroke="#e5e5e5" strokeWidth="2" /></Icon></button>
              <Avatar>CH</Avatar>
            </AccountTools>
          </DocumentBar>

          <Ribbon>
            <WorkspaceButton>DISEÑO <Caret /></WorkspaceButton>
            <RibbonBody>
              <RibbonTabs>
                <RibbonTab $on>SOLIDO</RibbonTab>
                <RibbonTab>SUPERFICIE</RibbonTab>
                <RibbonTab>MALLA</RibbonTab>
                <RibbonTab>CHAPA</RibbonTab>
                <RibbonTab>HERRAMIENTAS</RibbonTab>
              </RibbonTabs>
              <Groups>
                <Group $w={158}>
                  <GroupIcons>
                    <ToolButton aria-label="Crear boceto"><SketchIcon /></ToolButton>
                    <ToolButton $on aria-label="Extrusión"><ExtrudeIcon /></ToolButton>
                    <ToolButton aria-label="Revolución"><RevolveIcon /></ToolButton>
                    <ToolButton aria-label="Agujero"><HoleIcon /></ToolButton>
                  </GroupIcons>
                  <GroupLabel>CREAR <Caret /></GroupLabel>
                </Group>
                {groups.map((g) => (
                  <React.Fragment key={g.name}>
                    <Separator />
                    <Group $w={g.w}>
                      <GroupIcons>{g.icons.map((icon, i) => <ToolButton key={i} aria-label={`${g.name} ${i + 1}`}>{icon}</ToolButton>)}</GroupIcons>
                      <GroupLabel>{g.name} <Caret /></GroupLabel>
                    </Group>
                  </React.Fragment>
                ))}
              </Groups>
            </RibbonBody>
          </Ribbon>

          <Canvas>
            <Viewport />
            <ExtrudeDialog />
            <ValueBox>
              <Icon w={5} h={20}><path d="M1 1v18M4 2v18" stroke="#bbb" strokeDasharray="1 2" /></Icon>
              <input aria-label="Distancia de extrusión" defaultValue="-300.00 mm" />
              <button aria-label="Más opciones"><Icon w={4} h={14}><g fill="#777"><circle cx="2" cy="2" r="1.600" /><circle cx="2" cy="7" r="1.600" /><circle cx="2" cy="12" r="1.600" /></g></Icon></button>
            </ValueBox>
            <ViewBar>
              {views.map((v) => <ViewButton key={v.name} $w={v.w} aria-label={v.name}><Icon w={17}>{v.icon}</Icon>{v.caret && <Caret />}</ViewButton>)}
            </ViewBar>
            <Status>1 Perfil | Área : 314.159 mm^2</Status>
          </Canvas>

          <Timeline>
            <Playback>
              {playback.map(([name, d]) => <button key={name} aria-label={name}><Icon><path d={d} fill="#444" /></Icon></button>)}
            </Playback>
            <Track>
              <Feature aria-label="Boceto 1"><Icon w={17}><path d="M3 1.500h11M1.500 3v11M14.500 3v5M3 14.500h6" stroke="#555" strokeDasharray="3 2" /><path d="M0 0h3v3H0zM13 0h3v3h-3zM0 13h3v3H0z" fill="#1484d6" /><Pencil /></Icon></Feature>
              <Feature aria-label="Revolución 1"><RevolveIcon w={17} /></Feature>
              {[1, 2, 3, 4].map((n) => <Feature key={n} aria-label={`Empalme ${n}`}><FilletIcon w={17} /></Feature>)}
              <Feature $on aria-label="Boceto 2"><Icon w={17}><path d="M2 1.500h13v6M1.500 2v13h7" stroke="#234" strokeDasharray="3 2" /><Pencil /></Icon></Feature>
              <Marker width="12" height="32" viewBox="0 0 12 32"><path d="M0 0h12v4L7 9v23H5V9L0 4z" fill="#555" /></Marker>
            </Track>
            <TimelineGear aria-label="Preferencias"><Gear c="#999" /></TimelineGear>
          </Timeline>
        </Workspace>
      </Main>

      <Floating>
        <FloatingRow><Bullet plus />NAVEGADOR</FloatingRow>
        <FloatingRow><Bullet plus />COMENTARIOS</FloatingRow>
      </Floating>

      <Taskbar>
        <StartButton aria-label="Inicio de Windows"><Icon><path d="M0 2.200L7 1v6.500H0zM8 1l8-1v7.500H8zM0 8.500h7V15l-7-1.200zM8 8.500h8V16l-8-1z" fill="#fff" /></Icon></StartButton>
        <SearchBox>
          <Icon w={17}><circle cx="10.500" cy="6" r="5" stroke="#222" strokeWidth="1.300" /><path d="M7 10l-6 6" stroke="#222" strokeWidth="1.300" /></Icon>
          <input aria-label="Buscar en Windows" placeholder="Escribe aquí para buscar" />
        </SearchBox>
        <Apps>
          <AppButton aria-label="Vista de tareas"><Icon w={17}><path d="M.5 0v3.500h11V0M.5 6.500h11v5H.5zM.5 16v-2.500h11V16M15 0v4M15 9v7" stroke="#fff" /><path d="M13.500 5.500h3v3h-3z" fill="#fff" /></Icon></AppButton>
          <AppButton aria-label="Edge">
            <Icon w={25}>
              <defs><linearGradient id="edge" x1="0" y1="0" x2="1" y2="0"><stop offset="0" stopColor="#2aa7e4" /><stop offset=".6" stopColor="#30c2c4" /><stop offset="1" stopColor="#6bdc4b" /></linearGradient></defs>
              <circle cx="12.500" cy="12.500" r="12" fill="#0f6cbd" />
              <path d="M.5 12C1 4 7 .5 13 .5c7 0 11.500 5 11.500 10 0 4-3 6-6.500 6-3 0-4-1.500-3-3 2-4-2-6.500-6-6C5 8 1.500 9 .5 12z" fill="url(#edge)" />
              <path d="M10 12c-2 5 2 9 7 9 2 0 4-.5 5-1.500-2 3-6 5-9 5-5 0-7-5-6-8 .5-2 2-4 3-4.500z" fill="#0c4f96" />
              <path d="M14 12c1 0 2 1 1.500 2-1 2 0 3 3 3 3 0 5-1 6.500-3v4c-3 2-7 2-9 1s-4-5-2-7z" fill="#1d1d1d" />
            </Icon>
          </AppButton>
          <AppButton aria-label="Correo"><Icon w={24} h={22}><path d="M0 8l12-8 12 8v3H0z" fill="#0f64b4" /><path d="M2 7h20v6l-10 4L2 13z" fill="#f4f4f4" /><path d="M0 8l12 8-12 6z" fill="#2aa4ee" /><path d="M24 8L0 22h24z" fill="#46bdf7" /><path d="M0 22l12-7 12 7z" fill="#1f8ede" /></Icon></AppButton>
          <AppButton aria-label="Dropbox"><Icon w={24} h={21}><path d="M6 0l6 3.800-6 3.800L0 3.800zM18 0l6 3.800-6 3.800-6-3.800zM6 7.600l6 3.800-6 3.800-6-3.800zM18 7.600l6 3.800-6 3.800-6-3.800zM12 12.800l6 3.800-6 3.900-6-3.900z" fill="#fff" /></Icon></AppButton>
          <AppButton aria-label="Explorador"><Icon w={22} h={18}><path d="M0 0h9l2 2v3H0z" fill="#d99a08" /><path d="M0 3h9l2-2h11v17H0z" fill="#fcd462" /><path d="M4 18v-8h14v8h-4v-4H8v4z" fill="#3b94dc" /></Icon></AppButton>
          <AppButton aria-label="Chrome" $bg="linear-gradient(90deg, #1d1d1d 4px, #3a6b34 4px, #3a6b34 40px, #2c4229 40px, #2c4229 44px, #1d1d1d 44px)" $line="#47d83c">
            <Icon w={23}><circle cx="11.500" cy="11.500" r="11" fill="#fbc116" /><path d="M11.500 11.500L2 6a11 11 0 0 1 19 0z" fill="#dd4b3e" /><path d="M11.500 11.500L2 6a11 11 0 0 0 8 16.500l4-6z" fill="#2da14f" /><path d="M11.500 6H21a11 11 0 0 0-9.500-5.500z" fill="#dd4b3e" /><circle cx="11.500" cy="11.500" r="5.500" fill="#fff" /><circle cx="11.500" cy="11.500" r="4.300" fill="#4285f4" /></Icon>
          </AppButton>
          <AppButton aria-label="Fusion 360" $bg="#4a4a4a" $line="#76b9ed"><Icon w={24}><path d="M0 0h24v24H0z" fill="#fae5d6" /><path d="M9 18V3h9v3h-5v3h4v3h-4v6z" fill="#dd8530" /><path d="M9 3L7 5v13h2z" fill="#8c4a14" /><path d="M13 20h8" stroke="#e2a06a" strokeWidth="2" /></Icon></AppButton>
        </Apps>
        <Tray>
          <TrayButton $w={156} aria-label="Ayuda">
            <Icon w={24}><circle cx="11" cy="11" r="10" fill="#1595d3" stroke="#fff" strokeWidth="1.500" /><path d="M7 8c0-5 8-5 8-.5 0 3.500-4 3-4 6M11 15v2.500" stroke="#fff" strokeWidth="2.500" /><circle cx="18.500" cy="16" r="5" fill="#e81123" /><path d="M18.500 13v3.500M18.500 17.500v1.500" stroke="#fff" strokeWidth="1.500" /></Icon>
          </TrayButton>
          <TrayButton $w={139} $large>
            <Icon w={19}><defs><linearGradient id="sun" x1="0" y1="0" x2="1" y2="1"><stop offset="0" stopColor="#ffe27a" /><stop offset="1" stopColor="#ff9a10" /></linearGradient></defs><circle cx="9.500" cy="9.500" r="9.300" fill="url(#sun)" /></Icon>
            {"19°C  Soleado"}
          </TrayButton>
          <TrayButton $w={24} aria-label="Iconos ocultos"><Icon w={12} h={7}><path d="M1 6l5-5 5 5" stroke="#fff" strokeWidth="1.300" /></Icon></TrayButton>
          <TrayButton $w={25} aria-label="Sincronización"><Icon w={17}><path d="M1 2l14-1v13H1z" stroke="#fff" strokeWidth="1.200" /><path d="M4 6c2-2 5-2 7 0M11 3v3H8M4 11V8h3M4 9c1 2 3 2 5 2" stroke="#fff" /><circle cx="12.500" cy="12.500" r="4" fill="#2f72b8" /></Icon></TrayButton>
          <TrayButton $w={25} aria-label="Batería"><Icon w={15} h={9}><path d="M.5 .5h12v8H.5z" stroke="#fff" /><path d="M2 2h3v5H2zM13 3h2v3h-2z" fill="#fff" /></Icon></TrayButton>
          <TrayButton $w={25} aria-label="Wi-Fi"><Icon w={13}><path d="M1 12C1 5 5 1 12 1M4 12c0-5 3-8 8-8M7 12c0-3 2-5 5-5" stroke="#ccc" strokeWidth="1.300" /><circle cx="11" cy="11" r="1.700" fill="#fff" /></Icon></TrayButton>
          <TrayButton $w={28}>ESP</TrayButton>
          <Clock>15:10<br />5/11/2021</Clock>
          <TrayButton $w={42} aria-label="Notificaciones: 3">
            <Icon w={24}><path d="M0 1h16v11H8l-3 3v-3H0z" fill="#fff" /><path d="M3 4h10M3 6.500h10M3 9h6" stroke="#1d1d1d" /><circle cx="16" cy="15" r="8" fill="#2b2b2b" stroke="#999" /><text x="16" y="19" textAnchor="middle" fontSize="11" fontWeight="bold" fill="#fff">3</text></Icon>
          </TrayButton>
          <ShowDesktop />
        </Tray>
      </Taskbar>
    </Screen>
  );
}
